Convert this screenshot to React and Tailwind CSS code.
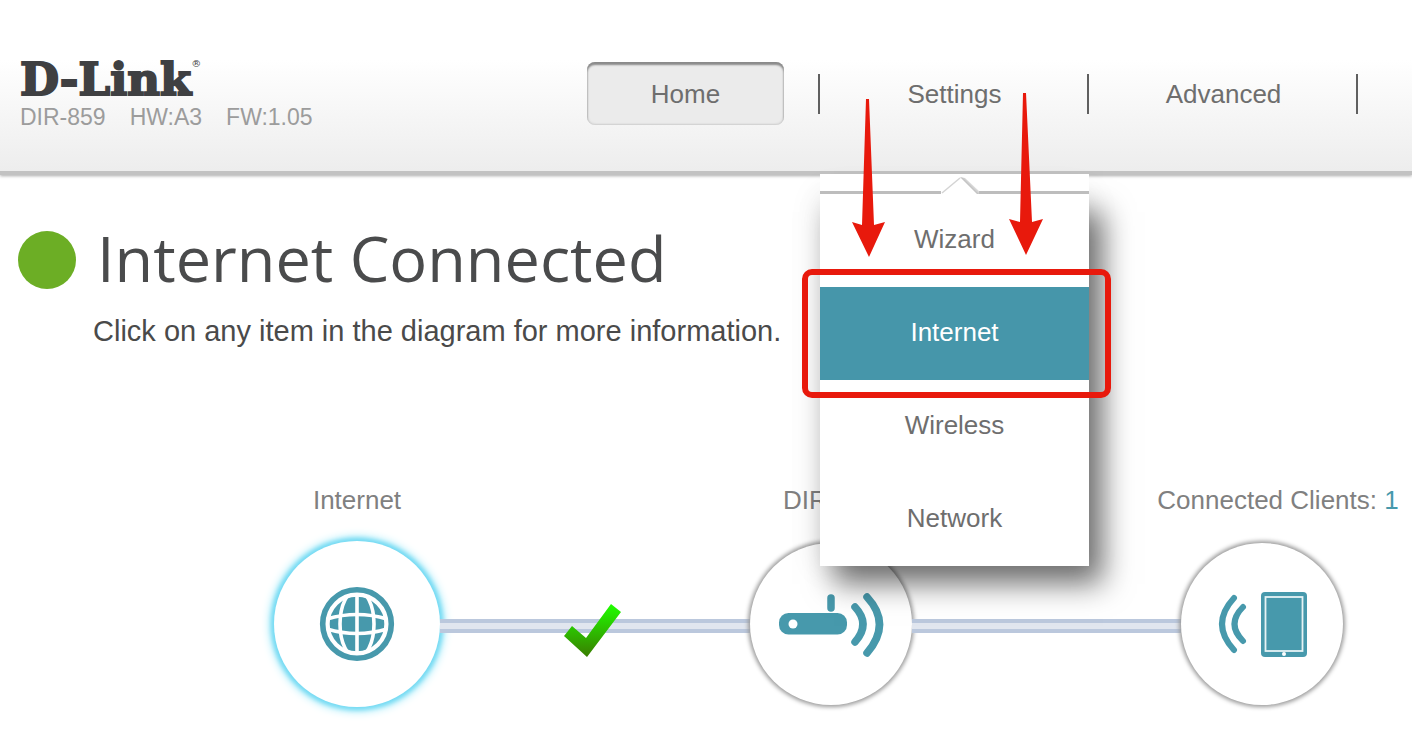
const SETTINGS_MENU = ['Wizard', 'Internet', 'Wireless', 'Network'];

function GlobeIcon() {
  return (
    <svg className="w-[76px] h-[76px]" viewBox="0 0 76 76" fill="none" aria-hidden="true">
      <circle cx="38" cy="38" r="30" fill="#4799ac" />
      <g stroke="#fff" strokeWidth="3.6">
        <path d="M38 8v60" />
        <ellipse cx="38" cy="38" rx="17" ry="34" />
        <path d="M8 33q30-9 60 0M8 43q30 9 60 0" />
      </g>
      <circle cx="38" cy="38" r="29.5" stroke="#fff" strokeWidth="4.4" />
      <circle cx="38" cy="38" r="34.3" stroke="#4799ac" strokeWidth="5.6" />
    </svg>
  );
}

function RouterIcon() {
  return (
    <svg className="w-[106px] h-[66px]" viewBox="0 0 106 66" fill="none" aria-hidden="true">
      <rect x="1" y="22" width="68" height="21.5" rx="9.5" fill="#4799ac" />
      <circle cx="15" cy="33" r="4.5" fill="#fff" />
      <g stroke="#4799ac" strokeLinecap="round" strokeWidth="7.5">
        <path d="M53 7v10" />
        <path d="M77 16q16 17 0 35" />
        <path d="M89 6q25 27 0 56" />
      </g>
    </svg>
  );
}

function ClientIcon() {
  return (
    <svg className="w-[90px] h-[66px]" viewBox="0 0 90 66" fill="none" aria-hidden="true">
      <g stroke="#4799ac" strokeLinecap="round" strokeWidth="6">
        <path d="M17 7q-24 26 0 52" />
        <path d="M26 16q-17 17 0 34" />
      </g>
      <rect x="44" y="1" width="46" height="65" rx="4" fill="#4799ac" />
      <rect x="48.5" y="6" width="37" height="54" stroke="#e6f3f5" strokeWidth="1.8" />
      <circle cx="67" cy="63" r="2" fill="#fff" />
    </svg>
  );
}

function CheckMark() {
  return (
    <svg className="absolute left-2/5 top-[63px] w-[57px] h-[54px]" viewBox="0 0 57 54" aria-label="Connected">
      <defs>
        <linearGradient id="check" x1="0" y1="0" x2="0" y2="1">
          <stop offset="0" stopColor="#1fff00" />
          <stop offset="1" stopColor="#3a7d00" />
        </linearGradient>
      </defs>
      <path d="M0 32L8 22L22 34L47 0L57 8L23 53Z" fill="url(#check)" />
    </svg>
  );
}

function Connector({ className, children }) {
  return (
    <div className={`relative flex h-[166px] basis-0 items-center pt-1 ${className}`}>
      <div className="h-[14px] w-full border-y-4 border-[#bbc8dd] bg-[#e1e6ef]" />
      {children}
    </div>
  );
}

function Node({ label, active, children }) {
  return (
    <div className={`flex shrink-0 flex-col items-center gap-[23px] ${active ? 'w-[166px]' : 'w-[162px]'}`}>
      <div className="whitespace-nowrap text-[26px] leading-9 text-[#808080]">{label}</div>
      <div className="flex h-[166px] items-center">
        <button
          type="button"
          className={
            active
              ? 'relative flex size-[166px] items-center justify-center rounded-full bg-white shadow-[0_0_4px_3px_#74daf3,0_0_10px_4px_#9be8f8]'
              : 'relative flex size-[162px] items-center justify-center rounded-full bg-white shadow-[0_0_4px_2px_#999]'
          }
        >
          {children}
        </button>
      </div>
    </div>
  );
}

function SettingsMenu() {
  return (
    <div className="absolute left-0 right-0 top-28 z-10">
      <div className="relative z-10 flex h-5 items-end bg-white">
        <div className="h-[3px] grow-[121] bg-[#bdbdbd]" />
        <svg className="h-5 w-[38px]" viewBox="0 0 38 20" fill="none" aria-hidden="true">
          <defs>
            <linearGradient id="caret" x1="25" y1="14" x2="32" y2="7" gradientUnits="userSpaceOnUse">
              <stop offset="0" stopColor="#999" />
              <stop offset="1" stopColor="#fff" />
            </linearGradient>
          </defs>
          <path d="M19 3L24 4L38 17V20H36Z" fill="url(#caret)" />
          <path d="M1 19L19 4" stroke="#d4d4d4" strokeWidth="1.5" />
        </svg>
        <div className="h-[3px] grow-[110] bg-[#bdbdbd]" />
      </div>
      <ul className="bg-white shadow-[14px_18px_28px_rgba(0,0,0,0.55),0_0_30px_rgba(0,0,0,0.1)]">
        {SETTINGS_MENU.map((item) => (
          <li key={item} className="relative">
            <a
              href="#"
              className={
                item === 'Internet'
                  ? 'flex h-[93px] items-center justify-center bg-[#4696aa] pb-1 text-white'
                  : 'flex h-[93px] items-center justify-center pb-1'
              }
            >
              {item}
            </a>
            {item === 'Internet' && (
              <div className="pointer-events-none absolute -left-[18px] -right-[22px] -inset-y-[18px] z-10 rounded-[10px] border-[6px] border-[#e8190c]" />
            )}
          </li>
        ))}
      </ul>
      <svg
        className="pointer-events-none absolute left-8 -top-[82px] z-20 h-[166px] w-[192px]"
        viewBox="0 0 192 166"
        fill="#e8190c"
        aria-hidden="true"
      >
        <path d="M14 7h3l5 126l11-3L17 165L0 130l10 3Z" />
        <path d="M171 1h3l6 129l11-3L174 163L157 127l11 3Z" />
      </svg>
    </div>
  );
}

function NavItem({ label, active, children }) {
  return (
    <li className="relative flex w-[269px] items-center justify-center">
      <a
        href="#"
        className={
          active
            ? 'flex h-[63px] w-[197px] items-center justify-center rounded-lg bg-[#ebebeb] shadow-[inset_0_3px_2px_#8a8a8a,inset_0_0_2px_1px_#ccc]'
            : 'flex h-[63px] w-[197px] items-center justify-center'
        }
      >
        {label}
      </a>
      <span className="absolute right-0 h-10 w-[2px] bg-[#606060]" />
      {children}
    </li>
  );
}

export default function App() {
  return (
    <div className="overflow-x-hidden bg-white pb-6 font-['Liberation_Sans',Arial,sans-serif]">
      <header className="flex border-b-4 border-[#c2c2c2] bg-linear-to-b from-white from-35% to-[#ededed] pt-[58px] pb-[39px] shadow-[0_1px_3px_#aaa]">
        <div className="flex-1 pl-5">
          <div className="flex items-start font-['DejaVu_Serif',serif] text-[#3f4042]">
            <span className="text-[45px] font-bold leading-[44px] [-webkit-text-stroke:2px_#3f4042]">D-Link</span>
            <span className="text-[10px] leading-3">®</span>
          </div>
          <div className="flex gap-6 text-[23px] leading-[30px] text-[#9c9c9c]">
            <span>DIR-859</span>
            <span>HW:A3</span>
            <span>FW:1.05</span>
          </div>
        </div>
        <nav className="shrink-0 pt-1 pr-[54px]">
          <ul className="flex text-[26px] leading-9 text-[#6e6e6e]">
            <NavItem label="Home" active />
            <NavItem label="Settings">
              <SettingsMenu />
            </NavItem>
            <NavItem label="Advanced" />
          </ul>
        </nav>
      </header>

      <main className="pt-14">
        <section className="grid grid-cols-[58px_1fr] gap-x-[17px] pl-[18px]">
          <span className="size-[58px] rounded-full bg-[#6cae25]" />
          <h1 className="pl-1 font-['Open_Sans',sans-serif] text-[63px] leading-[54px] text-[#4a4b4c]">
            Internet Connected
          </h1>
          <p className="col-start-2 mt-6 text-[29px] leading-9 text-[#4a4a4a]">
            Click on any item in the diagram for more information.
          </p>
        </section>

        <section className="mt-[133px] flex items-end pl-[274px] pr-[69px]">
          <Node label="Internet" active>
            <GlobeIcon />
          </Node>
          <Connector className="grow-[311]">
            <CheckMark />
          </Connector>
          <Node label="DIR-859">
            <RouterIcon />
          </Node>
          <Connector className="grow-[269]" />
          <Node
            label={
              <span className="pl-8">
                Connected Clients: <span className="text-[#4799ac]">1</span>
              </span>
            }
          >
            <ClientIcon />
          </Node>
        </section>
      </main>
    </div>
  );
}
